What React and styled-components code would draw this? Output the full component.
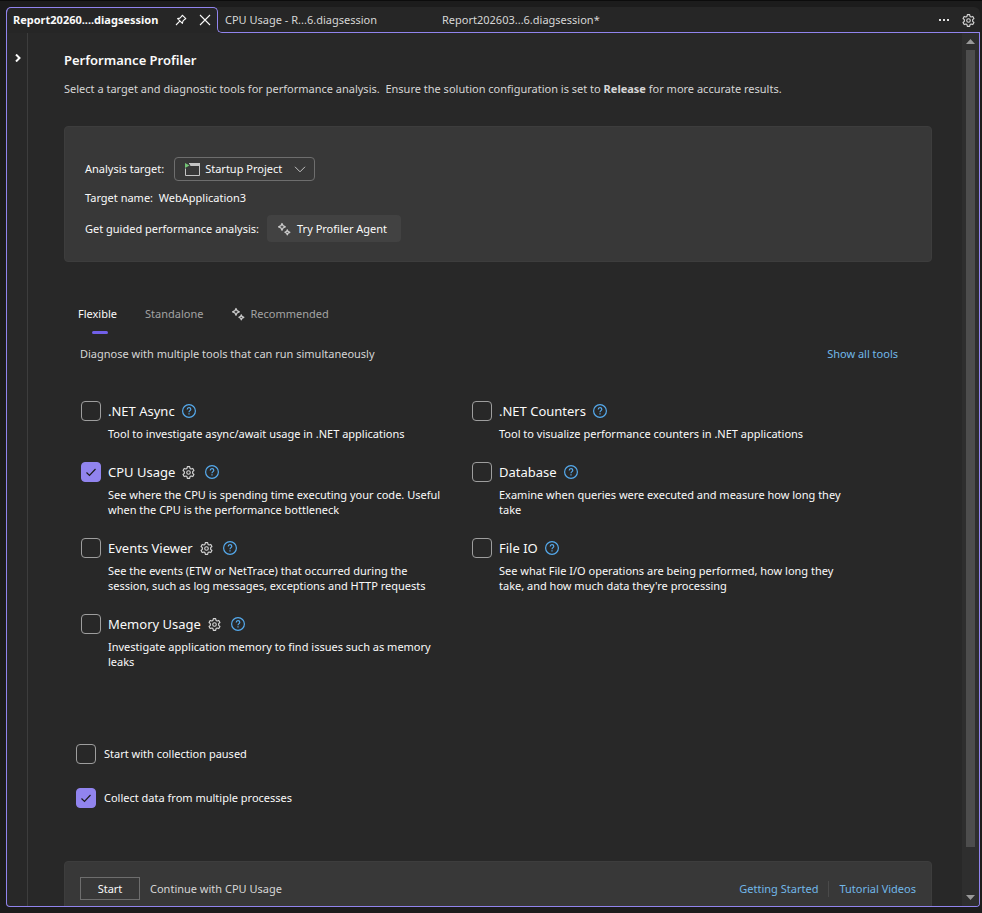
import React, { useState } from 'react'
import styled, { createGlobalStyle } from "styled-components";

const purple = "#9184ee";
const tools = [
    { id: "async", name: ".NET Async", text: "Tool to investigate async/await usage in .NET applications" },
    { id: "counters", name: ".NET Counters", text: "Tool to visualize performance counters in .NET applications" },
    { id: "cpu", name: "CPU Usage", settings: true, text: "See where the CPU is spending time executing your code. Useful when the CPU is the performance bottleneck" },
    { id: "database", name: "Database", text: "Examine when queries were executed and measure how long they take" },
    { id: "events", name: "Events Viewer", settings: true, text: "See the events (ETW or NetTrace) that occurred during the session, such as log messages, exceptions and HTTP requests" },
    { id: "fileio", name: "File IO", text: "See what File I/O operations are being performed, how long they take, and how much data they're processing" },
    { id: "memory", name: "Memory Usage", settings: true, text: "Investigate application memory to find issues such as memory leaks" },
];

function GearIcon({ size }) {
    return <svg width={size} height={size} viewBox="0 0 16 16" fill="none" stroke="#d6d6d6" strokeWidth="1.4" strokeLinejoin="round">
        <path d="M6.600 .8h2.800l.5 2.200 1.300.7 2.100-.7 1.400 2.500-1.600 1.500v2l1.600 1.500-1.400 2.500-2.100-.7-1.300.7-.5 2.200H6.600l-.5-2.200-1.300-.7-2.100.7-1.400-2.500 1.600-1.500V7L1.300 5.500l1.400-2.500 2.100.7 1.300-.7z" />
        <circle cx="8" cy="8" r="2.200" />
    </svg>
}

function HelpIcon() {
    return <svg width="14" height="14" viewBox="0 0 14 14" fill="none" stroke="currentColor" strokeWidth="1.2">
        <circle cx="7" cy="7" r="6.400" />
        <path d="M5.200 5.500c0-1.200.8-1.900 1.800-1.900s1.800.7 1.800 1.700c0 1.300-1.800 1.400-1.800 2.900" />
        <path d="M7 9.300v1.300" />
    </svg>
}

function SparkleIcon() {
    return <svg width="14" height="14" viewBox="0 0 14 14" fill="none" stroke="#c8c8c8" strokeWidth="1.300" strokeLinejoin="round">
        <path d="M5 1.500l1 2.100 2.300 1.200L6 6 5 8.200 4 6 1.600 4.800 4 3.600z" />
        <path d="M10.300 7.800l.7 1.600 1.800.9-1.800.9-.7 1.600-.7-1.600-1.700-.9 1.700-.9z" />
    </svg>
}

function PinIcon() {
    return <svg width="12" height="12" viewBox="0 0 12 12" fill="none" stroke="currentColor" strokeWidth="1.1" strokeLinejoin="round">
        <path d="M7.300 1.200l3.500 3.500-1 .5-1.900 1.900-.5 2.300-4.800-4.800 2.300-.5 1.900-1.900zM4.800 7.200L1 11" />
    </svg>
}

function CloseIcon() {
    return <svg width="12" height="12" viewBox="0 0 12 12" fill="none" stroke="currentColor" strokeWidth="1.1">
        <path d="M1 1l10 10M11 1L1 11" />
    </svg>
}

function ProjectIcon() {
    return <svg width="15" height="13" viewBox="0 0 15 13">
        <path d="M.5 5.500V12.500H14.500V.5H4" fill="none" stroke="#c4c4c4" />
        <path d="M4 0h11v3H5.500z" fill="#c4c4c4" />
        <path d="M0 0l4.500 2.500L0 5z" fill="#74c476" />
    </svg>
}

function Check({ id, checked, onChange }) {
    return <CheckBox>
        <input id={id} type="checkbox" checked={checked} onChange={onChange} />
        {checked && <svg width="20" height="20" viewBox="0 0 20 20" fill="none" stroke="#1c1c1c" strokeWidth="1.200">
            <path d="M5.500 10.500l3 3 6-6.500" />
        </svg>}
    </CheckBox>
}

function Tool({ tool, checked, onChange }) {
    return <ToolItem>
        <Check id={tool.id} checked={checked} onChange={onChange} />
        <div>
            <ToolTitle>
                <label htmlFor={tool.id}>{tool.name}</label>
                {tool.settings && <IconButton aria-label={`${tool.name} settings`}><GearIcon size={13} /></IconButton>}
                <HelpLink href="#help" aria-label={`${tool.name} help`} $wide={tool.settings}><HelpIcon /></HelpLink>
            </ToolTitle>
            <ToolText>{tool.text}</ToolText>
        </div>
    </ToolItem>
}

function App() {
    const [checked, setChecked] = useState({ cpu: true, multiple: true });
    const toggle = (id) => setChecked({ ...checked, [id]: !checked[id] });

    return <Shell>
        <GlobalStyle />
        <TabStrip>
            <ActiveTab>
                <strong>Report20260....diagsession</strong>
                <IconButton aria-label="Pin"><PinIcon /></IconButton>
                <IconButton aria-label="Close"><CloseIcon /></IconButton>
            </ActiveTab>
            <OtherTabs>
                <FileTab>CPU Usage - R...6.diagsession</FileTab>
                <FileTab>Report202603...6.diagsession*</FileTab>
                <StripActions>
                    <IconButton aria-label="More">
                        <svg width="12" height="2" viewBox="0 0 12 2" fill="currentColor"><path d="M1 0h2v2H1zM5 0h2v2H5zM9 0h2v2H9z" /></svg>
                    </IconButton>
                    <IconButton aria-label="Window settings"><GearIcon size={13} /></IconButton>
                </StripActions>
            </OtherTabs>
        </TabStrip>

        <Body>
            <Rail>
                <IconButton aria-label="Expand">
                    <svg width="6" height="8" viewBox="0 0 6 8" fill="none" stroke="currentColor" strokeWidth="2"><path d="M1 .5L4.500 4 1 7.500" /></svg>
                </IconButton>
            </Rail>

            <Main>
                <Title>Performance Profiler</Title>
                <Intro>Select a target and diagnostic tools for performance analysis.&nbsp; Ensure the solution configuration is set to <strong>Release</strong> for more accurate results.</Intro>

                <TargetCard>
                    <Row $gap="10px">
                        <label htmlFor="target">Analysis target:</label>
                        <SelectBox>
                            <ProjectIcon />
                            <select id="target"><option>Startup Project</option></select>
                            <svg width="12" height="7" viewBox="0 0 12 7" fill="none" stroke="#c4c4c4"><path d="M1 .8l5 5 5-5" /></svg>
                        </SelectBox>
                    </Row>
                    <Row><span>Target name:&nbsp; WebApplication3</span></Row>
                    <Row>
                        <span>Get guided performance analysis:</span>
                        <AgentButton><SparkleIcon />Try Profiler Agent</AgentButton>
                    </Row>
                </TargetCard>

                <ModeTabs role="tablist">
                    <ModeTab role="tab" aria-selected="true" $active>Flexible</ModeTab>
                    <ModeTab role="tab" aria-selected="false">Standalone</ModeTab>
                    <ModeTab role="tab" aria-selected="false"><SparkleIcon />Recommended</ModeTab>
                </ModeTabs>

                <ModeInfo>
                    <span>Diagnose with multiple tools that can run simultaneously</span>
                    <Link href="#all">Show all tools</Link>
                </ModeInfo>

                <ToolGrid>
                    {tools.map((tool) => (
                        <Tool key={tool.id} tool={tool} checked={!!checked[tool.id]} onChange={() => toggle(tool.id)} />
                    ))}
                </ToolGrid>

                <Options>
                    <Row>
                        <Check id="paused" checked={!!checked.paused} onChange={() => toggle("paused")} />
                        <label htmlFor="paused">Start with collection paused</label>
                    </Row>
                    <Row>
                        <Check id="multiple" checked={!!checked.multiple} onChange={() => toggle("multiple")} />
                        <label htmlFor="multiple">Collect data from multiple processes</label>
                    </Row>
                </Options>

                <Footer>
                    <StartButton>Start</StartButton>
                    <span>Continue with CPU Usage</span>
                    <FooterLinks>
                        <Link href="#start">Getting Started</Link>
                        <Link href="#videos">Tutorial Videos</Link>
                    </FooterLinks>
                </Footer>
            </Main>

            <ScrollBar>
                <svg width="9" height="5" viewBox="0 0 9 5" fill="#999"><path d="M4.500 0L9 5H0z" /></svg>
                <ScrollThumb />
                <svg width="9" height="5" viewBox="0 0 9 5" fill="#999"><path d="M0 0h9L4.500 5z" /></svg>
            </ScrollBar>
        </Body>
    </Shell>;
}

export default App


const GlobalStyle = createGlobalStyle`
* { box-sizing: border-box; }
body {
    margin: 0;
    background: #1c1c1c;
    color: #fafafa;
    font: 11px/16px "Noto Sans", "Open Sans", sans-serif;
}
button, select { font: inherit; color: inherit; }
svg { flex: none; display: block; }
`;

const Shell = styled.div`
display: flex;
flex-direction: column;
height: 100vh;
padding: 6px 2px 6px 6px;
border-top: 1px solid #0c0c0c;
overflow: hidden;
`;

const IconButton = styled.button`
display: flex;
flex: none;
padding: 0;
border: 0;
background: none;
`;

const Link = styled.a`
color: #71b7e8;
text-decoration: none;
`;

const TabStrip = styled.div`
display: flex;
flex: none;
height: 26px;
background: #262626;
border-left: 1px solid ${purple};
border-radius: 6px 6px 0 0;
`;

const ActiveTab = styled.div`
position: relative;
display: flex;
flex: none;
align-items: center;
width: 212px;
margin-left: -1px;
padding: 0 7px;
white-space: nowrap;

>strong { margin-right: auto; }
>button { margin-left: 12px; }

&::before {
    content: "";
    position: absolute;
    inset: 0 0 5px 0;
    border: 1px solid ${purple};
    border-bottom: 0;
    border-radius: 5px 5px 0 0;
    pointer-events: none;
}

&::after {
    content: "";
    position: absolute;
    left: calc(100% - 1px);
    bottom: 0;
    width: 6px;
    height: 5px;
    border: solid ${purple};
    border-width: 0 0 1px 1px;
    border-bottom-left-radius: 5px;
}
`;

const OtherTabs = styled.div`
display: flex;
flex: 1;
align-items: center;
margin-left: 5px;
padding: 1px 5px 0 2px;
border-bottom: 1px solid ${purple};
`;

const FileTab = styled.div`
width: 217px;
color: #d6d6d6;
white-space: nowrap;
`;

const StripActions = styled.div`
display: flex;
align-items: center;
gap: 12px;
margin-left: auto;
color: #e0e0e0;
`;

const Body = styled.div`
display: flex;
flex: 1;
min-height: 0;
background: #282828;
border: solid ${purple};
border-width: 0 1px 1px;
border-radius: 0 0 4px 4px;
overflow: hidden;
`;

const Rail = styled.div`
display: flex;
justify-content: center;
align-items: flex-start;
flex: none;
width: 21px;
padding: 21px 0 0 2px;
border-right: 1px solid #3d3d3d;
`;

const Main = styled.main`
flex: 1;
min-width: 0;
padding: 18px 30px 0 36px;
overflow: hidden;
`;

const Title = styled.h1`
margin: 0 0 12px;
font-size: 13px;
line-height: 18px;
font-weight: 600;
`;

const Intro = styled.p`
margin: 0 0 29px;
color: #d6d6d6;
`;

const TargetCard = styled.section`
display: flex;
flex-direction: column;
gap: 9px;
padding: 30px 20px 19px;
background: #383838;
border: 1px solid #3d3d3d;
border-radius: 4px;
`;

const Row = styled.div`
display: flex;
align-items: center;
gap: ${(props) => props.$gap || "8px"};
`;

const SelectBox = styled.div`
display: flex;
align-items: center;
height: 24px;
padding: 0 8px 0 10px;
border: 1px solid #6e6e6e;
border-radius: 4px;

>select {
    width: 94px;
    padding: 0 0 0 5px;
    border: 0;
    background: transparent;
    appearance: none;
    outline: none;
}
`;

const AgentButton = styled.button`
display: flex;
align-items: center;
gap: 6px;
height: 27px;
padding: 0 14px 0 10px;
border: 0;
border-radius: 4px;
background: #424242;
`;

const ModeTabs = styled.div`
display: flex;
margin-top: 44px;
`;

const ModeTab = styled.button`
position: relative;
display: flex;
align-items: center;
gap: 5px;
padding: 0 14px 12px;
border: 0;
background: none;
color: ${(props) => props.$active ? "#fafafa" : "#a3a3a3"};

&::after {
    content: "";
    position: absolute;
    left: calc(50% - 6px);
    bottom: 0;
    width: 16px;
    height: 3px;
    border-radius: 2px;
    background: ${(props) => props.$active ? "#7160e8" : "transparent"};
}
`;

const ModeInfo = styled.div`
display: flex;
justify-content: space-between;
margin-top: 12px;
padding: 0 34px 0 16px;
color: #d6d6d6;
`;

const ToolGrid = styled.div`
display: grid;
grid-template-columns: 1fr 1fr;
margin: 39px 69px 0 17px;
`;

const ToolItem = styled.div`
display: flex;
gap: 7px;
padding: 0 21px 21px 0;
`;

const ToolTitle = styled.div`
display: flex;
align-items: center;
gap: 7px;
margin-bottom: 5px;
font-size: 13px;
line-height: 20px;
`;

const HelpLink = styled.a`
color: #55aaed;
margin-left: ${(props) => props.$wide ? "3px" : "0"};
`;

const ToolText = styled.p`
margin: 0;
line-height: 15px;
`;

const CheckBox = styled.span`
position: relative;
flex: none;
width: 20px;
height: 20px;

>input {
    display: block;
    width: 20px;
    height: 20px;
    margin: 0;
    appearance: none;
    border: 1px solid #9e9e9e;
    border-radius: 4px;
}

>input:checked {
    border-color: ${purple};
    background: ${purple};
}

>svg {
    position: absolute;
    inset: 0;
    pointer-events: none;
}
`;

const Options = styled.div`
display: flex;
flex-direction: column;
gap: 24px;
margin: 54px 0 53px 12px;
`;

const Footer = styled.footer`
display: flex;
align-items: center;
gap: 10px;
padding: 15px 15px 24px;
background: #383838;
border: 1px solid #3d3d3d;
border-radius: 4px;
color: #d6d6d6;
`;

const StartButton = styled.button`
width: 60px;
height: 23px;
padding: 0;
border: 1px solid #6e6e6e;
background: #383838;
color: #fafafa;
`;

const FooterLinks = styled.nav`
display: flex;
margin-left: auto;

>a + a {
    margin-left: 10px;
    padding-left: 10px;
    border-left: 1px solid #4a4a4a;
}
`;

const ScrollBar = styled.div`
display: flex;
flex-direction: column;
align-items: center;
flex: none;
gap: 6px;
width: 17px;
padding: 6px 0;
background: #2e2e2e;
`;

const ScrollThumb = styled.div`
flex: 1;
width: 9px;
margin-bottom: 42px;
background: #4d4d4d;
`;
